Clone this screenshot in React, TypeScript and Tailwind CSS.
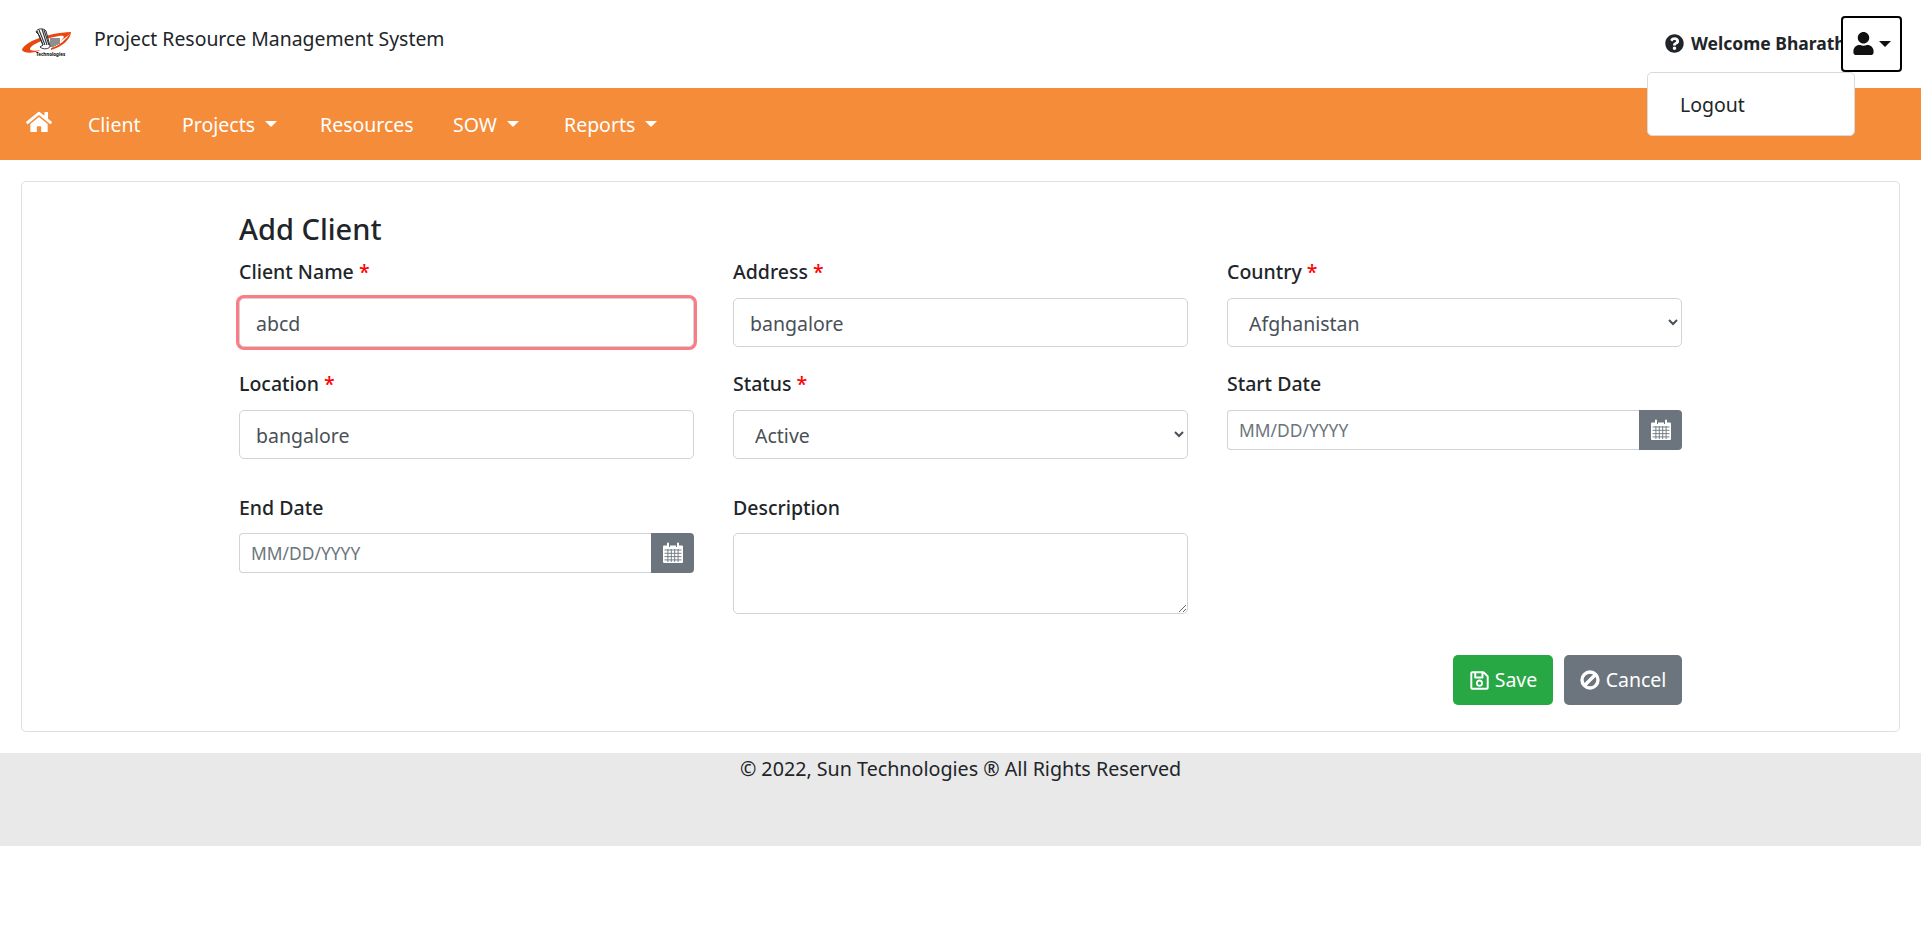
// Add Client screen: top header, orange nav, form card and footer.
import type { ReactNode } from "react";
import { FaHome, FaQuestionCircle, FaRegSave, FaUser } from "react-icons/fa";

const FONT = "[font-family:'Noto_Sans','Open_Sans',sans-serif]";

const NAV = [
  { label: "Client", width: "w-[94px]" },
  { label: "Projects", caret: true, width: "w-[138px]" },
  { label: "Resources", width: "w-[133px]" },
  { label: "SOW", caret: true, width: "w-[111px]" },
  { label: "Reports", caret: true, width: "w-[110px]" },
];

function Caret({ className = "" }: { className?: string }) {
  return <span className={`inline-block border-x-[6px] border-t-[6px] border-x-transparent border-t-current ${className}`} />;
}

// Sun Technologies mark: tilted orange ring with the striped letters over it.
function Logo() {
  return (
    <div className="relative h-[40px] w-[50px] shrink-0">
      <svg viewBox="0 0 50 40" className="h-[40px] w-[50px]">
        <path d="M1 26 C3 18 26 9 50 8 C50 10 44 14 38 18 C45 13 44 11 38 12 C25 14 9 21 9 25 C9 27 14 27 20 26 C14 29 3 30 1 26 Z" fill="#e8470f" />
        <path d="M30 24 C38 22 46 15 50 8 C50 14 42 23 30 26 Z" fill="#e8470f" />
        <path d="M15 8 C16 4 23 4 25 7 L29 22 C29 25 22 26 19 23 L22 21 L18 11 Z" fill="#fff" stroke="#333" strokeWidth="1" />
        <path d="M16 7 L22 21 M18 6 L24 21 M21 5 L26 21 M23 6 L28 21" stroke="#333" strokeWidth="1.1" fill="none" />
        <path d="M30 14 L30 23 M32 14 L32 23 M34 14 L34 22 M36 14 L36 21 M38 14 L38 20" stroke="#333" strokeWidth="1.1" fill="none" />
      </svg>
      <span className="absolute left-[15px] top-[27px] whitespace-nowrap text-[4.5px] leading-[6px] font-bold text-black">Technologies</span>
    </div>
  );
}

function CalendarIcon() {
  return (
    <svg viewBox="0 0 20 22" className="h-[22px] w-[20px]" fill="currentColor">
      <path d="M1 3.5 H4 V1.5 A1 1 0 0 1 6 1.5 V5 H7 V3.5 H13 V5 H14 V1.5 A1 1 0 0 1 16 1.5 V3.5 H19 A1 1 0 0 1 20 4.5 V20 A1 1 0 0 1 19 21 H1 A1 1 0 0 1 0 20 V4.5 A1 1 0 0 1 1 3.5 Z" />
      <path d="M1.5 8 H18.5 M1.5 11.3 H18.5 M1.5 14.6 H18.5 M1.5 17.9 H18.5 M4.9 7 V20 M8.3 7 V20 M11.7 7 V20 M15.1 7 V20" stroke="#6c757d" strokeWidth="0.9" fill="none" />
    </svg>
  );
}

function BanIcon() {
  return (
    <svg viewBox="0 0 20 20" className="h-[20px] w-[20px]" fill="none" stroke="currentColor" strokeWidth="3.4">
      <circle cx="10" cy="10" r="8" />
      <path d="M4.5 15.5 L15.5 4.5" />
    </svg>
  );
}

function Label({ text, required, className = "" }: { text: string; required?: boolean; className?: string }) {
  return (
    <label className={`block text-[19.5px] leading-[30px] font-medium text-[#212529] ${className}`}>
      {text}
      {required && <span className="text-[#ff0000]"> *</span>}
    </label>
  );
}

function Field({ label, required, children, className = "", labelClass = "mb-[11px]" }: { label: string; required?: boolean; children: ReactNode; className?: string; labelClass?: string }) {
  return (
    <div className={className}>
      <Label text={label} required={required} className={labelClass} />
      {children}
    </div>
  );
}

const controlClass =
  "block h-[49px] w-full rounded-[5px] border border-[#ced4da] bg-white text-[19.5px] text-[#495057] outline-none";

function DateInput() {
  return (
    <div className="flex h-[40px] w-full">
      <input
        placeholder="MM/DD/YYYY"
        className="h-full min-w-0 flex-1 rounded-l-[4px] border border-r-0 border-[#ced4da] bg-white pl-[11px] text-[17.4px] text-[#495057] outline-none placeholder:text-[#6c757d]"
      />
      <span className="flex h-full w-[43px] items-center justify-center rounded-r-[4px] bg-[#6c757d] text-white">
        <CalendarIcon />
      </span>
    </div>
  );
}

export default function App() {
  return (
    <div className={`min-h-[947px] bg-white ${FONT}`}>
      {/* Top header */}
      <header className="flex h-[88px] items-center justify-between pl-[21px] pr-[19px]">
        <div className="flex items-center">
          <Logo />
          <span className="ml-[23px] -translate-y-[5px] text-[19.4px] text-[#212529]">Project Resource Management System</span>
        </div>
        <div className="relative mt-[16px] flex h-[56px] items-center self-start">
          <FaQuestionCircle className="mr-[7px] -translate-y-[1px] text-[19px] text-[#212529]" />
          <span className="w-[150px] -translate-y-[1px] overflow-hidden whitespace-nowrap text-[17.5px] font-bold text-[#212529]">Welcome Bharath</span>
          <button className="flex h-[56px] w-[61px] items-center justify-center gap-[4px] rounded-[4px] border-2 border-black bg-white text-[#111]">
            <FaUser className="-translate-y-[1px] text-[23px]" />
            <Caret />
          </button>
          {/* Open user menu */}
          <div className="absolute right-[47px] top-[56px] z-10 h-[64px] w-[208px] rounded-[5px] border border-[#d9d9d9] bg-white pl-[32px] text-[19.5px] leading-[64px] text-[#212529]">
            Logout
          </div>
        </div>
      </header>

      {/* Main nav */}
      <nav className="flex h-[72px] items-center bg-[#f48c3a] pl-[26px] text-[19.5px] text-white">
        <FaHome className="mr-[36px] -translate-y-[2px] text-[26px]" />
        {NAV.map((item) => (
          <a key={item.label} className={`flex translate-y-[1px] items-center gap-[10px] ${item.width}`}>
            {item.label}
            {item.caret && <Caret className="-translate-y-[1px]" />}
          </a>
        ))}
      </nav>

      {/* Form card */}
      <main className="mx-[21px] mt-[21px] h-[551px] rounded-[5px] border border-[#dfdfdf] px-[217px] pt-[27px]">
        <h1 className="mb-[8px] text-[29px] leading-[40px] font-medium text-[#212529]">Add Client</h1>
        <div className="grid grid-cols-3 gap-x-[39px]">
          <Field label="Client Name" required>
            <input defaultValue="abcd" className={`${controlClass} pl-[16px] pt-[1px] shadow-[0_0_0_3px_#fd7b82]`} />
          </Field>
          <Field label="Address" required>
            <input defaultValue="bangalore" className={`${controlClass} pl-[16px] pt-[1px]`} />
          </Field>
          <Field label="Country" required>
            <select defaultValue="Afghanistan" className={`${controlClass} pl-[17px] pt-[1px]`}>
              <option>Afghanistan</option>
            </select>
          </Field>

          <Field label="Location" required className="mt-[22px]">
            <input defaultValue="bangalore" className={`${controlClass} pl-[16px] pt-[1px]`} />
          </Field>
          <Field label="Status" required className="mt-[22px]">
            <select defaultValue="Active" className={`${controlClass} pl-[17px] pt-[1px]`}>
              <option>Active</option>
            </select>
          </Field>
          <Field label="Start Date" className="mt-[22px]">
            <DateInput />
          </Field>

          <Field label="End Date" className="mt-[34px]" labelClass="mb-[10px]">
            <DateInput />
          </Field>
          <Field label="Description" className="mt-[34px]" labelClass="mb-[10px]">
            <textarea className="block h-[81px] w-full rounded-[5px] border border-[#ced4da] bg-white outline-none" />
          </Field>
        </div>
        <div className="mt-[41px] flex justify-end gap-[11px]">
          <button className="flex h-[50px] w-[100px] items-center justify-center gap-[5px] rounded-[5px] bg-[#28a745] text-[19.5px] text-white">
            <FaRegSave className="text-[21px]" /> Save
          </button>
          <button className="flex h-[50px] w-[118px] items-center justify-center gap-[6px] rounded-[5px] bg-[#6c757d] text-[19.5px] text-white">
            <BanIcon /> Cancel
          </button>
        </div>
      </main>

      {/* Footer */}
      <footer className="mt-[21px] h-[93px] bg-[#e9e9e9] pt-[1px] text-center text-[19.7px] leading-[30px] text-[#212529]">
        © 2022, Sun Technologies ® All Rights Reserved
      </footer>
    </div>
  );
}
